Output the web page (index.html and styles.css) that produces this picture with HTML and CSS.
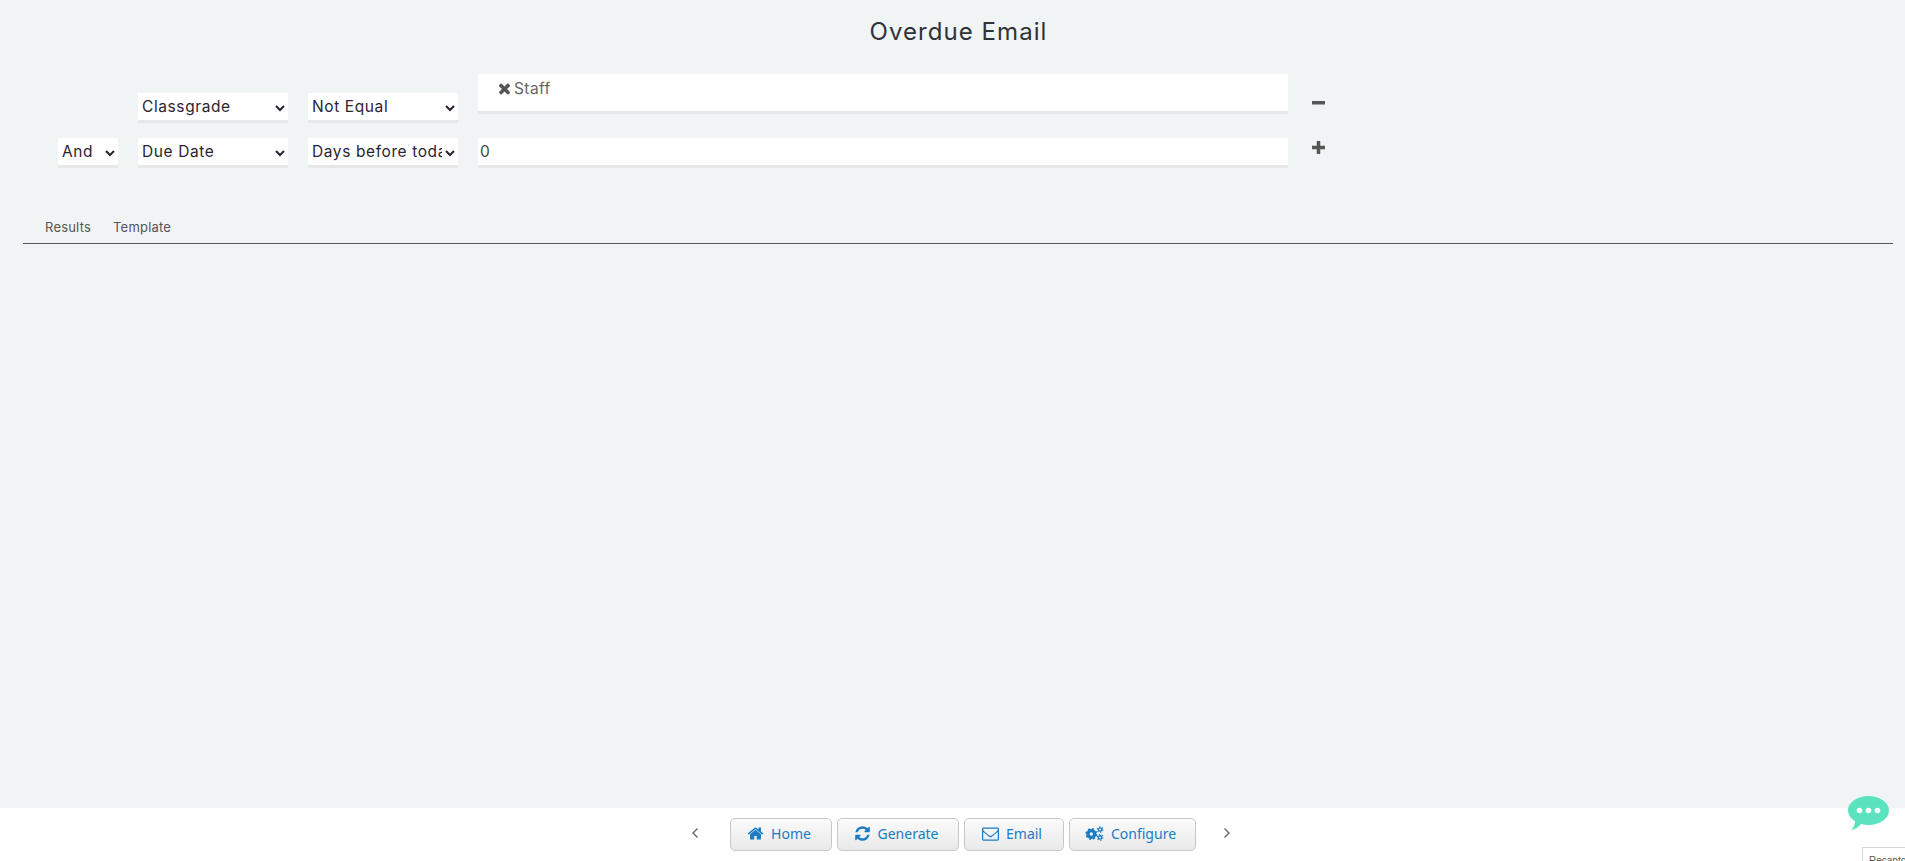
FILE: index.html
```html
<!DOCTYPE html>
<html lang="en">
<head>
<meta charset="utf-8">
<title>Overdue Email</title>
<link rel="stylesheet" href="styles.css">
</head>
<body>
<main class="main">
  <h1 class="title">Overdue Email</h1>
  <section class="filters">
    <div class="row">
      <div class="conj"></div>
      <select class="sel field"><option>Classgrade</option></select>
      <select class="sel field"><option>Not Equal</option></select>
      <div class="value tags">
        <svg class="x" viewBox="0 0 1408 1792"><path d="M1298 1322q0 40-28 68l-136 136q-28 28-68 28t-68-28l-294-294-294 294q-28 28-68 28t-68-28l-136-136q-28-28-28-68t28-68l294-294-294-294q-28-28-28-68t28-68l136-136q28-28 68-28t68 28l294 294 294-294q28-28 68-28t68 28l136 136q28 28 28 68t-28 68l-294 294 294 294q28 28 28 68z"/></svg>
        <span>Staff</span>
      </div>
      <svg class="act act-minus" viewBox="0 0 13 13"><rect y="5" width="13" height="3.500"/></svg>
    </div>
    <div class="row">
      <select class="sel conj"><option>And</option></select>
      <select class="sel field"><option>Due Date</option></select>
      <select class="sel field"><option>Days before today</option></select>
      <input class="value num" value="0">
      <svg class="act act-plus" viewBox="0 0 13 13"><rect y="4.750" width="13" height="3.500"/><rect x="4.750" width="3.500" height="13"/></svg>
    </div>
  </section>
  <nav class="tabs">
    <a class="tab tab-active">Results</a>
    <a class="tab">Template</a>
  </nav>
</main>
<footer class="footer">
  <svg class="chev" viewBox="0 0 8 12"><path d="M6.500 1.500 2 6l4.500 4.500"/></svg>
  <div class="btns">
    <button class="btn btn-home"><svg class="ic" viewBox="0 0 1792 1792"><path d="M1472 992v480q0 26-19 45t-45 19h-384v-384h-256v384h-384q-26 0-45-19t-19-45v-480q0-1 .5-3t.5-3l575-474 575 474q1 2 1 6zm223-69l-62 74q-8 9-21 11h-3q-13 0-21-7l-692-577-692 577q-12 8-24 7-13-2-21-11l-62-74q-8-10-7-23.500t11-21.500l719-599q32-26 76-26t76 26l244 204v-195q0-14 9-23t23-9h192q14 0 23 9t9 23v408l219 182q10 8 11 21.500t-7 23.500z"/></svg>Home</button>
    <button class="btn btn-gen"><svg class="ic" viewBox="0 0 1792 1792"><path d="M1639 1056q0 5-1 7-64 268-268 434.500t-478 166.500q-146 0-282.500-55t-243.500-157l-129 129q-19 19-45 19t-45-19-19-45v-448q0-26 19-45t45-19h448q26 0 45 19t19 45-19 45l-137 137q71 66 161 102t187 36q134 0 250-65t186-179q11-17 53-117 8-23 30-23h192q13 0 22.500 9.500t9.500 22.500zm25-800v448q0 26-19 45t-45 19h-448q-26 0-45-19t-19-45 19-45l138-138q-148-137-349-137-134 0-250 65t-186 179q-11 17-53 117-8 23-30 23h-199q-13 0-22.500-9.500t-9.500-22.500v-7q65-268 270-434.500t480-166.500q146 0 284 55.500t245 156.500l130-129q19-19 45-19t45 19 19 45z"/></svg>Generate</button>
    <button class="btn btn-mail"><svg class="ic" viewBox="0 0 1792 1792"><path d="M1664 1504v-768q-32 36-69 66-268 206-426 338-51 43-83 67t-86.500 48.500-102.500 24.500h-2q-48 0-102.500-24.500t-86.500-48.500-83-67q-158-132-426-338-37-30-69-66v768q0 13 9.500 22.500t22.500 9.500h1472q13 0 22.500-9.500t9.500-22.500zm0-1051v-24.500l-.5-13-3-12.500-5.500-9-9-7.500-14-2.500h-1472q-13 0-22.500 9.500t-9.500 22.500q0 168 147 284 193 152 401 317 6 5 35 29.500t46 37.500 44.500 31.500 50.500 27.500 43 9h2q20 0 43-9t50.500-27.500 44.500-31.500 46-37.500 35-29.500q208-165 401-317 54-43 100.500-115.500t46.500-131.500zm128-37v1088q0 66-47 113t-113 47h-1472q-66 0-113-47t-47-113v-1088q0-66 47-113t113-47h1472q66 0 113 47t47 113z"/></svg>Email</button>
    <button class="btn btn-conf"><svg class="ic ic-cogs" viewBox="0 0 18 14">
      <circle class="g1" cx="6" cy="7.500" r="3.200"/><circle class="g1t" cx="6" cy="7.500" r="4.900"/>
      <circle class="g2" cx="14.300" cy="3.300" r="1.600"/><circle class="g2t" cx="14.300" cy="3.300" r="2.700"/>
      <circle class="g2" cx="14.300" cy="10.700" r="1.600"/><circle class="g2t" cx="14.300" cy="10.700" r="2.700"/>
    </svg>Configure</button>
  </div>
  <svg class="chev" viewBox="0 0 8 12"><path d="M1.500 1.500 6 6l-4.500 4.500"/></svg>
</footer>
<svg class="chat" viewBox="0 0 41 34"><path d="M20.500 0C31.800 0 41 6.500 41 14.500S31.800 29 20.500 29c-2.600 0-5-.3-7.300-.9C10.500 31.500 6 33.800 3 34c2.300-2 3.800-5 4.100-8.700C2.800 22.600 0 18.800 0 14.500 0 6.500 9.200 0 20.500 0z"/><circle class="dot" cx="11.500" cy="14.500" r="2.800"/><circle class="dot" cx="20.500" cy="14.500" r="2.800"/><circle class="dot" cx="29.500" cy="14.500" r="2.800"/></svg>
<div class="recaptcha">Recaptcha</div>
</body>
</html>
```
FILE: styles.css
```css
* { box-sizing: border-box; }
html, body { height: 100%; }
body {
  margin: 0;
  height: 100vh;
  overflow: hidden;
  display: flex;
  flex-direction: column;
  background: #f0f4f5;
  font-family: Inter, "Noto Sans", sans-serif;
  color: #333;
}
.main { flex: 1; min-height: 0; padding: 0 12px 0 23px; }
.title {
  margin: 0;
  height: 64px;
  padding: 16px 0 0 0;
  text-align: center;
  font-size: 24px;
  line-height: 32px;
  font-weight: 400;
  letter-spacing: 1.05px;
  color: #2f3338;
  transform: translateX(-5px);
  margin-left: 11px;
}
.filters { padding: 10px 0 0 35px; display: flex; flex-direction: column; gap: 15px; }
.row { display: flex; align-items: flex-end; gap: 20px; }
.conj { width: 60px; flex: none; }
.sel {
  height: 30px;
  background: #fff;
  border: 0;
  border-bottom: 3px solid #e6e7e8;
  border-radius: 0;
  padding: 0;
  font: 400 15.500px Inter, sans-serif;
  letter-spacing: .6px;
  color: #2b2430;
}
.field { width: 150px; flex: none; }
.value {
  width: 810px;
  flex: none;
  background: #fff;
  border: 0;
  border-bottom: 3px solid #e6e7e8;
  border-radius: 0;
  font: 400 15.500px Inter, sans-serif;
  color: #444;
}
.tags {
  height: 40px;
  margin-bottom: 9px;
  padding: 3px 0 0 20px;
  display: flex;
  align-items: flex-start;
  gap: 3px;
  line-height: 24px;
  color: #666;
}
.tags span { letter-spacing: .4px; }
.x { width: 13px; height: 17px; margin-top: 3px; fill: #555; }
.num { height: 30px; padding: 0 2px; outline: 0; }
.act { width: 13px; height: 13px; flex: none; fill: #555; margin-left: 4px; }
.act-minus { margin-bottom: 14px; }
.act-plus { margin-bottom: 14px; }
.tabs {
  margin-top: 47px;
  height: 29px;
  display: flex;
  gap: 22px;
  padding: 2px 0 0 22px;
  border-bottom: 1px solid #555;
  width: 1870px;
}
.tab { font-size: 13px; line-height: 20px; color: #555; letter-spacing: .2px; }
.tab-active { color: #5c5648; }
.footer {
  height: 53px;
  flex: none;
  background: #fff;
  display: flex;
  justify-content: center;
  padding: 10px 0 0 16px;
  gap: 0;
}
.chev { width: 8px; height: 12px; margin: 9px 0 0; fill: none; stroke: #666; stroke-width: 1.400; }
.btns { display: flex; gap: 5px; margin: 0 27px 0 31px; }
.btn {
  height: 33px;
  padding: 0 3px 3px 0;
  display: flex;
  align-items: center;
  justify-content: center;
  gap: 7px;
  background: linear-gradient(#fbfbfb, #e9e9e9);
  border: 1px solid #c8c8c8;
  border-radius: 5px;
  font: 400 14px "Noto Sans", sans-serif;
  color: #1a7cc4;
}
.btn-home { width: 102px; }
.btn-gen { width: 122px; }
.btn-mail { width: 100px; }
.btn-conf { width: 127px; }
.ic { width: 17px; height: 17px; fill: #1a7cc4; flex: none; }
.ic-cogs { width: 19px; height: 15px; fill: none; }
.g1 { fill: none; stroke: #1a7cc4; stroke-width: 3.200; }
.g1t { fill: none; stroke: #1a7cc4; stroke-width: 1.500; stroke-dasharray: 1.900 1.950; }
.g2 { fill: none; stroke: #1a7cc4; stroke-width: 1.300; }
.g2t { fill: none; stroke: #1a7cc4; stroke-width: 1; stroke-dasharray: 1.300 1.530; }
.chat { position: fixed; left: 1848px; top: 796px; width: 41px; height: 34px; fill: #5be3c0; }
.dot { fill: #fff; }
.recaptcha {
  position: fixed;
  left: 1862px;
  top: 847px;
  width: 60px;
  height: 30px;
  padding: 7px 0 0 6px;
  background: #fff;
  border: 1px solid #d8d4dc;
  font: 10px "Liberation Sans", sans-serif;
  color: #555;
}
```
